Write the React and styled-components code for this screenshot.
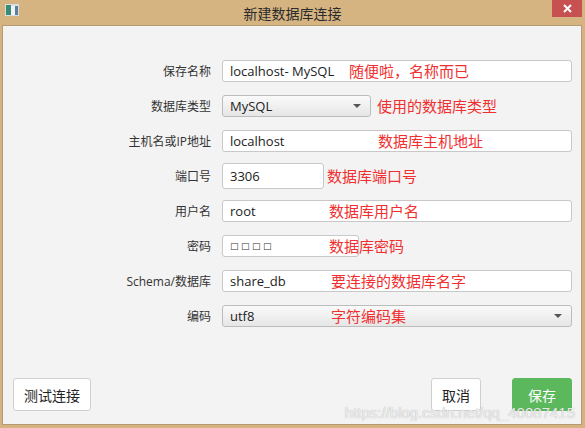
import React from "react";
import styled, { createGlobalStyle } from "styled-components";

const GlobalStyle = createGlobalStyle`
  html, body {
    margin: 0;
    padding: 0;
    background: #d6b482;
  }
  body {
    font-family: "Open Sans", "Noto Sans CJK SC", sans-serif;
  }
`;

const Frame = styled.div`
  width: 585px;
  height: 428px;
  display: flex;
  flex-direction: column;
  background: #d6b482;
  position: relative;
  overflow: hidden;
`;

const TitleBar = styled.div`
  height: 25px;
  flex: 0 0 25px;
  display: flex;
  align-items: center;
  justify-content: center;
  position: relative;
  font-family: "Noto Sans CJK SC", sans-serif;
  font-size: 14px;
  color: #2b2b2b;
`;

const AppIcon = styled.svg`
  position: absolute;
  left: 5px;
  top: 4px;
`;

const CloseButton = styled.div`
  position: absolute;
  right: 3px;
  top: 0;
  width: 30px;
  height: 17px;
  background: #c75050;
  display: flex;
  align-items: center;
  justify-content: center;
`;

const Content = styled.div`
  flex: 1;
  margin: 0 3px 3px 2px;
  background: #f3f3f3;
  border: 1px solid #b59a73;
  display: flex;
  flex-direction: column;
`;

const Form = styled.div`
  display: grid;
  grid-template-columns: 208px 350px;
  grid-auto-rows: 35px;
  column-gap: 11px;
  padding-top: 27px;
  align-items: center;
`;

const Label = styled.div`
  text-align: right;
  font-family: "Open Sans", "Noto Sans CJK SC", sans-serif;
  font-size: 12px;
  color: #333;
`;

const Cell = styled.div`
  position: relative;
  height: 100%;
  display: flex;
  align-items: center;
`;

const Input = styled.div`
  box-sizing: border-box;
  width: ${(p) => p.$w || "350px"};
  height: ${(p) => p.$h || "22px"};
  background: #fff;
  border: 1px solid #c8c8c8;
  border-radius: 3px;
  padding: 0 7px;
  display: flex;
  align-items: center;
  font-size: 13px;
  color: #222;
`;

const Select = styled.div`
  box-sizing: border-box;
  width: ${(p) => p.$w || "350px"};
  height: 22px;
  background: linear-gradient(#fafafa, #e6e6e6);
  border: 1px solid #bcbcbc;
  border-radius: 3px;
  padding: 0 7px;
  display: flex;
  align-items: center;
  justify-content: space-between;
  font-size: 13px;
  color: #222;
`;

const Arrow = styled.span`
  width: 0;
  height: 0;
  border-left: 4px solid transparent;
  border-right: 4px solid transparent;
  border-top: 4px solid #555;
  margin-right: 2px;
`;

const Dots = styled.span`
  font-family: "DejaVu Sans", sans-serif;
  font-size: 9px;
  letter-spacing: 2.5px;
  color: #333;
`;

const Note = styled.span`
  position: absolute;
  left: ${(p) => p.$left}px;
  top: 50%;
  transform: translateY(-52%);
  font-family: "Noto Sans CJK SC", sans-serif;
  font-size: 15px;
  color: #f03030;
  white-space: nowrap;
`;

const Spacer = styled.div`
  flex: 1;
`;

const Footer = styled.div`
  display: flex;
  align-items: center;
  padding: 0 9px 13px 10px;
`;

const Button = styled.button`
  box-sizing: border-box;
  height: 33px;
  padding: 0 ${(p) => p.$pad || 10}px;
  margin-left: ${(p) => p.$ml || 0}px;
  border: 1px solid ${(p) => (p.$primary ? "#5cb85c" : "#cfcfcf")};
  border-radius: 3px;
  background: ${(p) => (p.$primary ? "#5cb85c" : "#fff")};
  color: ${(p) => (p.$primary ? "#fff" : "#222")};
  font-family: "Noto Sans CJK SC", sans-serif;
  font-size: 14px;
  cursor: pointer;
`;

const Watermark = styled.div`
  position: absolute;
  right: 10px;
  bottom: 7px;
  font-family: "Liberation Sans", Arial, sans-serif;
  font-size: 15px;
  color: rgba(240, 240, 240, 0.95);
  text-shadow: 0 0 1px rgba(120, 120, 120, 0.6);
  pointer-events: none;
`;

const rows = [
  { label: "保存名称", kind: "input", value: "localhost- MySQL", note: "随便啦，名称而已", left: 127 },
  { label: "数据库类型", kind: "select", value: "MySQL", w: "149px", note: "使用的数据库类型", left: 155 },
  { label: "主机名或IP地址", kind: "input", value: "localhost", note: "数据库主机地址", left: 156 },
  { label: "端口号", kind: "input", value: "3306", w: "102px", h: "26px", note: "数据库端口号", left: 105 },
  { label: "用户名", kind: "input", value: "root", note: "数据库用户名", left: 107 },
  { label: "密码", kind: "password", w: "137px", note: "数据库密码", left: 107 },
  { label: "Schema/数据库", kind: "input", value: "share_db", note: "要连接的数据库名字", left: 109 },
  { label: "编码", kind: "select", value: "utf8", note: "字符编码集", left: 109 },
];

export default function App() {
  return (
    <Frame>
      <GlobalStyle />
      <TitleBar>
        <AppIcon width="14" height="12" viewBox="0 0 14 12">
          <rect x="0" y="0" width="14" height="12" fill="#d8dde0" />
          <rect x="1" y="1" width="5" height="10" fill="#3a8a78" />
          <rect x="6" y="2" width="4" height="9" fill="#eef4f6" />
          <rect x="10" y="2" width="3" height="9" fill="#5b7fa0" />
        </AppIcon>
        新建数据库连接
        <CloseButton>
          <svg width="9" height="9" viewBox="0 0 9 9">
            <path d="M1 1 L8 8 M8 1 L1 8" stroke="#fff" strokeWidth="2" />
          </svg>
        </CloseButton>
      </TitleBar>
      <Content>
        <Form>
          {rows.map((r) => (
            <React.Fragment key={r.label}>
              <Label>{r.label}</Label>
              <Cell>
                {r.kind === "input" && (
                  <Input $w={r.w} $h={r.h}>
                    {r.value}
                  </Input>
                )}
                {r.kind === "select" && (
                  <Select $w={r.w}>
                    {r.value}
                    <Arrow />
                  </Select>
                )}
                {r.kind === "password" && (
                  <Input $w={r.w}>
                    <Dots>□□□□</Dots>
                  </Input>
                )}
                <Note $left={r.left}>{r.note}</Note>
              </Cell>
            </React.Fragment>
          ))}
        </Form>
        <Spacer />
        <Footer>
          <Button $pad={10}>测试连接</Button>
          <Spacer />
          <Button $pad={10}>取消</Button>
          <Button $primary $pad={15} $ml={31}>
            保存
          </Button>
        </Footer>
      </Content>
      <Watermark>https://blog.csdn.net/qq_40087415</Watermark>
    </Frame>
  );
}
